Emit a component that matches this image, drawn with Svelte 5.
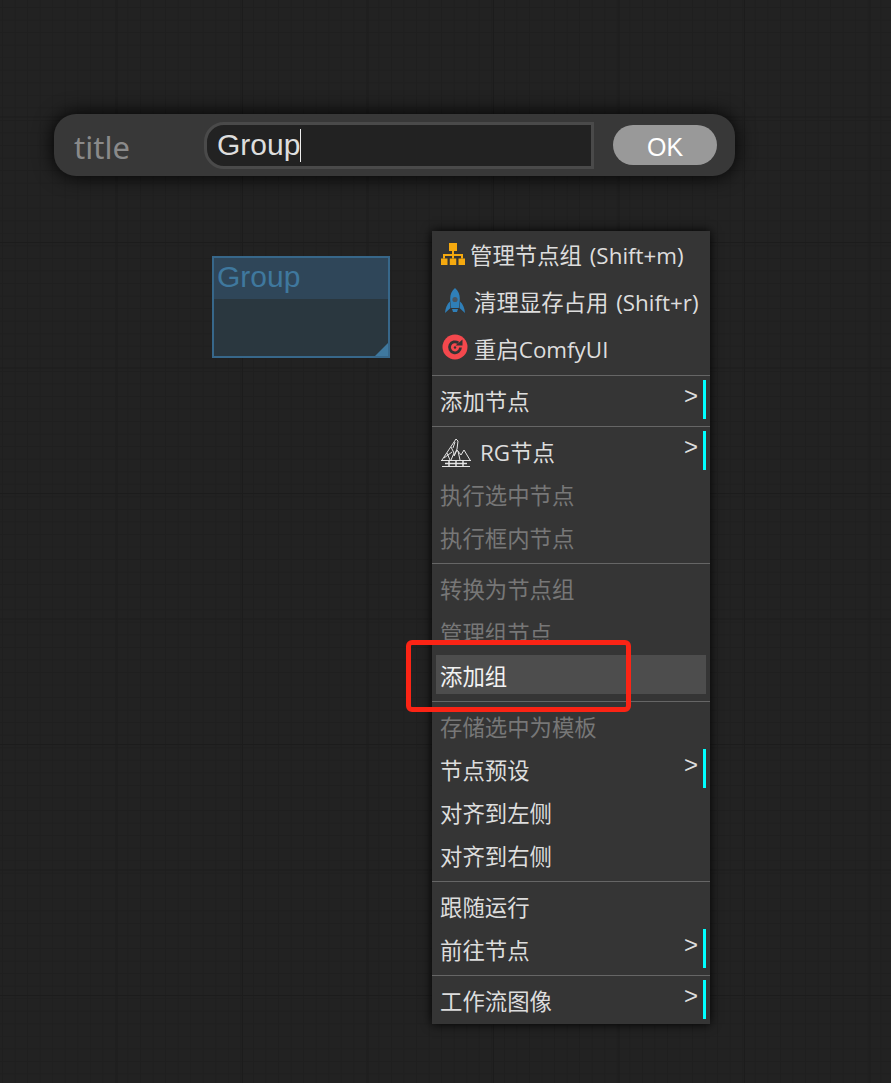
<script lang="ts">
  interface MenuEntry {
    label?: string;
    icon?: string;
    disabled?: boolean;
    submenu?: boolean;
    active?: boolean;
    separator?: boolean;
  }

  const entries: MenuEntry[] = [
    { label: '管理节点组 (Shift+m)', icon: 'org' },
    { label: '清理显存占用 (Shift+r)', icon: 'rocket' },
    { label: '重启ComfyUI', icon: 'restart' },
    { separator: true },
    { label: '添加节点', submenu: true },
    { separator: true },
    { label: 'RG节点', icon: 'rg', submenu: true },
    { label: '执行选中节点', disabled: true },
    { label: '执行框内节点', disabled: true },
    { separator: true },
    { label: '转换为节点组', disabled: true },
    { label: '管理组节点', disabled: true },
    { label: '添加组', active: true },
    { separator: true },
    { label: '存储选中为模板', disabled: true },
    { label: '节点预设', submenu: true },
    { label: '对齐到左侧' },
    { label: '对齐到右侧' },
    { separator: true },
    { label: '跟随运行' },
    { label: '前往节点', submenu: true },
    { separator: true },
    { label: '工作流图像', submenu: true },
  ];
</script>

<div class="canvas">
  <div class="prompt">
    <span class="prompt-name">title</span>
    <div class="prompt-input">Group<span class="caret"></span></div>
    <button class="prompt-ok">OK</button>
  </div>

  <div class="group-node">
    <div class="group-title">Group</div>
    <div class="group-grip"></div>
  </div>

  <div class="menu">
    {#each entries as entry}
      {#if entry.separator}
        <div class="separator"></div>
      {:else}
        <div
          class="entry"
          class:tall={entry.icon && entry.icon !== 'rg'}
          class:disabled={entry.disabled}
          class:submenu={entry.submenu}
          class:active={entry.active}
        >
          {#if entry.icon === 'org'}
            <svg class="icon org" viewBox="0 0 24 22" width="24" height="22">
              <g fill="#f5a90f">
                <rect x="8" y="0" width="8" height="8" />
                <rect x="0" y="15.500" width="6.500" height="6.500" />
                <rect x="8.750" y="15.500" width="6.500" height="6.500" />
                <rect x="17.500" y="15.500" width="6.500" height="6.500" />
                <path d="M11 8h2v3h9v4.500h-2V13h-7v2.500h-2V13H4v2.500H2V11h9z" />
              </g>
            </svg>
          {:else if entry.icon === 'rocket'}
            <svg class="icon rocket" viewBox="0 0 20 25" width="20" height="25">
              <path
                fill="#2f7fb8"
                d="M10 0c3.300 2.800 4.800 6.500 4.800 10.500 0 3-.3 6-1 9.500H6.200c-.7-3.500-1-6.500-1-9.500C5.200 6.500 6.700 2.800 10 0zM4.800 13.500 5.500 20 0 25c.4-4.800 2-8.600 4.800-11.500zM15.200 13.500C18 16.400 19.600 20.200 20 25l-5.500-5zM7 21h6l-1 3H8z"
              />
              <circle cx="10" cy="11.500" r="2.600" fill="#4a5560" />
            </svg>
          {:else if entry.icon === 'restart'}
            <svg class="icon restart" viewBox="0 0 26 26" width="26" height="26">
              <circle cx="13" cy="13" r="12.500" fill="#f4484d" />
              <path
                d="M18.500 13.500a5.500 5.500 0 1 1-2.200-4.600"
                fill="none"
                stroke="#333"
                stroke-width="2.800"
              />
              <path d="M13.500 11.500h7V5.500z" fill="#333" />
              <circle cx="13" cy="13.500" r="1.200" fill="#333" />
            </svg>
          {:else if entry.icon === 'rg'}
            <svg class="icon rg" viewBox="0 0 30 29" width="30" height="29">
              <g fill="none" stroke="#e4e4e4" stroke-width="1">
                <path d="M1 22 15 1l2 2-1 8-3 7 3-6 4 5 3-5 6 10" />
                <path d="M6 15l3 7M10 9l3 6-3 7M14 4l-2 6M17 13l2 9M3 20l8-6" />
                <path d="M0 22.500h30M1 28.500h28" />
                <path d="M4 25.500h22" stroke-width="1.500" />
                <path d="M8 23v5M15 23v5M22 23v5" stroke-width="1.500" />
              </g>
            </svg>
          {/if}
          <span class="label">{entry.label}</span>
          {#if entry.submenu}
            <span class="chevron">&gt;</span>
          {/if}
        </div>
      {/if}
    {/each}
  </div>

  <div class="callout"></div>
</div>

<style>
  :global(body) {
    background: #222;
  }

  .canvas {
    position: relative;
    width: 891px;
    height: 1083px;
    overflow: hidden;
    background-color: #222;
    background-image:
      linear-gradient(to right, #1c1c1c 1px, transparent 1px),
      linear-gradient(to bottom, #1c1c1c 1px, transparent 1px),
      linear-gradient(to right, #1f1f1f 1px, transparent 1px),
      linear-gradient(to bottom, #1f1f1f 1px, transparent 1px);
    background-size:
      125.500px 125.500px,
      125.500px 125.500px,
      12.550px 12.550px,
      12.550px 12.550px;
    background-position:
      -9px 0,
      0 -9px,
      2px 0,
      0 7px;
  }

  .prompt {
    position: absolute;
    left: 54px;
    top: 114px;
    width: 681px;
    height: 62px;
    box-sizing: border-box;
    display: flex;
    align-items: center;
    padding: 0 18px 0 20px;
    border-radius: 22px;
    background: #383838;
    box-shadow: 0 0 20px #000;
  }

  .prompt-name {
    width: 130px;
    font: 31px "Noto Sans", "Open Sans", sans-serif;
    color: #8a8a8a;
    margin-top: 4px;
  }

  .prompt-input {
    width: 390px;
    height: 47px;
    box-sizing: border-box;
    display: flex;
    align-items: center;
    padding-left: 10px;
    border: 3px solid #4a4a4a;
    border-radius: 20px 0 0 20px;
    background: #222;
    font: 30px "Liberation Sans", Arial, sans-serif;
    color: #ddd;
  }

  .caret {
    width: 1px;
    height: 33px;
    background: #eee;
  }

  .prompt-ok {
    width: 104px;
    height: 40px;
    margin-left: 19px;
    padding: 5px 0 0;
    border: none;
    border-radius: 20px;
    background: #999;
    color: #fff;
    font: 25px "Liberation Sans", Arial, sans-serif;
  }

  .group-node {
    position: absolute;
    left: 212px;
    top: 256px;
    width: 178px;
    height: 102px;
    box-sizing: border-box;
    border: 2px solid #37678a;
    background: #2a373f;
  }

  .group-title {
    height: 41px;
    padding-left: 3px;
    background: #2f4659;
    color: #3f789e;
    font: 30px/38px "Liberation Sans", Arial, sans-serif;
  }

  .group-grip {
    position: absolute;
    right: 0;
    bottom: 0;
    width: 0;
    height: 0;
    border-style: solid;
    border-width: 0 0 13px 13px;
    border-color: transparent transparent #3f789e transparent;
  }

  .menu {
    position: absolute;
    left: 432px;
    top: 231px;
    width: 278px;
    height: 793px;
    box-sizing: border-box;
    display: flex;
    flex-direction: column;
    background: #353535;
    box-shadow: 0 0 10px #000;
    font: 22.400px "Open Sans", "Noto Sans CJK SC", sans-serif;
    word-spacing: 2px;
    color: #ddd;
  }

  .entry {
    position: relative;
    height: 39.100px;
    flex: none;
    box-sizing: border-box;
    display: flex;
    align-items: center;
    margin: 0 4px 4px;
    padding: 2px 0 0 4px;
    white-space: nowrap;
  }

  .entry.tall {
    height: 43px;
    padding-top: 3px;
  }

  .entry.disabled {
    color: #777;
  }

  .entry.active {
    background: #4d4d4d;
    color: #f2f2f2;
  }

  .entry.submenu {
    border-right: 3px solid #0ff;
  }

  .chevron {
    position: absolute;
    right: 5px;
    top: 0;
    font: 24px/32px "Liberation Sans", Arial, sans-serif;
  }

  .separator {
    flex: none;
    height: 1px;
    margin: 3px 0 4px;
    background: #666;
  }

  .icon {
    flex: none;
  }

  .org {
    margin: -1px 5px 0 1px;
  }

  .rocket {
    margin: -1px 9px 0 5px;
  }

  .restart {
    margin: -3px 6px 0 2px;
  }

  .rg {
    margin: 1px 9px 0 1px;
  }

  .callout {
    position: absolute;
    left: 406px;
    top: 640px;
    width: 225px;
    height: 72px;
    box-sizing: border-box;
    border: 5px solid #fb2415;
    border-radius: 6px;
  }
</style>
